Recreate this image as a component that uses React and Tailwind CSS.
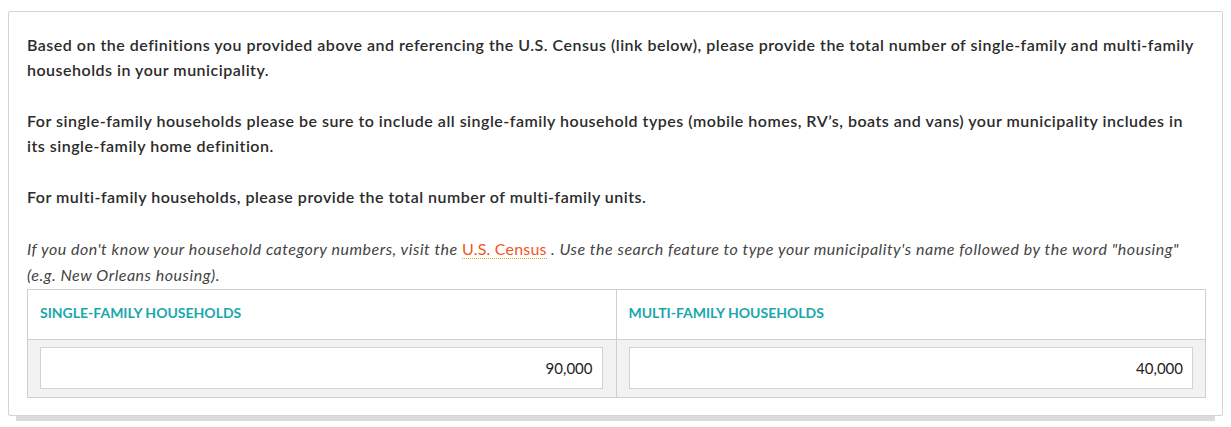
export default function App() {
  return (
    <div className="w-[1231px] h-[427px] bg-white pt-[11px] pl-[8px]" style={{ fontFamily: "Lato, 'Noto Sans', sans-serif" }}>
      <div className="w-[1215px] h-[405px] border border-[#d4d4d4] rounded-[2px] bg-white shadow-[0_13px_0_-8px_#dcdcdc] pt-[20px] px-[18px]">
        <div className="text-[16px] leading-[25px] font-semibold tracking-[0.5px] text-[#2b2b2b] whitespace-nowrap">
          <p>Based on the definitions you provided above and referencing the U.S. Census (link below), please provide the total number of single-family and multi-family<br />households in your municipality.</p>
          <p className="mt-[26px]">For single-family households please be sure to include all single-family household types (mobile homes, RV’s, boats and vans) your municipality includes in<br />its single-family home definition.</p>
          <p className="mt-[26px]">For multi-family households, please provide the total number of multi-family units.</p>
        </div>
        <p className="mt-[27px] text-[16px] leading-[26px] italic tracking-[0.52px] text-[#444] whitespace-nowrap">
          If you don't know your household category numbers, visit the{" "}
          <span className="not-italic text-[#f2551f] border-b border-dotted border-[#f39a1e] tracking-[0.2px]">U.S. Census</span>{" "}. Use the search feature to type your municipality's name followed by the word "housing"<br />(e.g. New Orleans housing).
        </p>
        <div className="grid grid-cols-2 border border-[#cfcfcf] w-[1179px] mt-[1px]">
          <div className="h-[50px] border-b border-r border-[#cfcfcf] pt-[12px] pl-[12px] text-[14px] font-bold text-[#17a8ad] uppercase">Single-Family Households</div>
          <div className="h-[50px] border-b border-[#cfcfcf] pt-[12px] pl-[12px] text-[14px] font-bold text-[#17a8ad] uppercase">Multi-Family Households</div>
          <div className="h-[57px] bg-[#f2f2f2] border-r border-[#cfcfcf] pt-[7px] pl-[12px] pr-[13px]">
            <div className="h-[42px] bg-white border border-[#d2d2d2] flex items-center justify-end pr-[9px] text-[15px] text-[#222]">90,000</div>
          </div>
          <div className="h-[57px] bg-[#f2f2f2] pt-[7px] px-[12px]">
            <div className="h-[42px] bg-white border border-[#d2d2d2] flex items-center justify-end pr-[9px] text-[15px] text-[#222]">40,000</div>
          </div>
        </div>
      </div>
    </div>
  );
}
